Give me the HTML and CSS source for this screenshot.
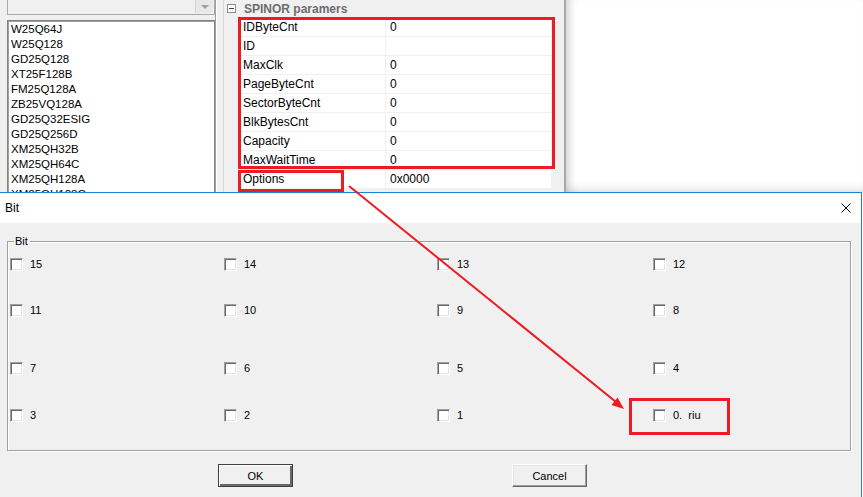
FILE: index.html
```html
<!DOCTYPE html>
<html lang="en">
<head>
    <meta charset="UTF-8">
    <meta name="viewport" content="width=device-width, initial-scale=1.0">
    <title>SPINOR Options - Bit</title>
    <link rel="stylesheet" href="styles.css">
</head>
<body>
    <div class="app">
        <div class="main">
            <div class="device-panel">
                <div class="combo"><span class="combo-btn"><span class="combo-arrow"></span></span></div>
                <ul class="device-list">
                    <li>W25Q64J</li>
                    <li>W25Q128</li>
                    <li>GD25Q128</li>
                    <li>XT25F128B</li>
                    <li>FM25Q128A</li>
                    <li>ZB25VQ128A</li>
                    <li>GD25Q32ESIG</li>
                    <li>GD25Q256D</li>
                    <li>XM25QH32B</li>
                    <li>XM25QH64C</li>
                    <li>XM25QH128A</li>
                    <li>XM25QH128C</li>
                </ul>
            </div>
            <div class="splitter"></div>
            <div class="prop-panel">
                <div class="prop-grid">
                    <div class="prop-cat"><span class="collapse-box"></span>SPINOR paramers</div>
                    <div class="prop-row"><span class="prop-name">IDByteCnt</span><span class="prop-value">0</span></div>
                    <div class="prop-row"><span class="prop-name">ID</span><span class="prop-value"></span></div>
                    <div class="prop-row"><span class="prop-name">MaxClk</span><span class="prop-value">0</span></div>
                    <div class="prop-row"><span class="prop-name">PageByteCnt</span><span class="prop-value">0</span></div>
                    <div class="prop-row"><span class="prop-name">SectorByteCnt</span><span class="prop-value">0</span></div>
                    <div class="prop-row"><span class="prop-name">BlkBytesCnt</span><span class="prop-value">0</span></div>
                    <div class="prop-row"><span class="prop-name">Capacity</span><span class="prop-value">0</span></div>
                    <div class="prop-row"><span class="prop-name">MaxWaitTime</span><span class="prop-value">0</span></div>
                    <div class="prop-row"><span class="prop-name">Options</span><span class="prop-value">0x0000</span></div>
                </div>
                <div class="prop-edge"></div>
            </div>
            <div class="desktop"></div>
        </div>

        <div class="dialog">
            <div class="title-bar">
                <span class="title">Bit</span>
                <svg class="close" width="10" height="10" viewBox="0 0 10 10">
                    <path d="M0.5 0.5 L9.5 9.5 M9.5 0.5 L0.5 9.5" stroke="#000" stroke-width="1" fill="none"/>
                </svg>
            </div>
            <div class="client">
                <div class="group">
                    <span class="group-label">Bit</span>
                    <div class="bits">
                        <label class="bit"><span class="check"></span>15</label>
                        <label class="bit"><span class="check"></span>14</label>
                        <label class="bit"><span class="check"></span>13</label>
                        <label class="bit"><span class="check"></span>12</label>
                        <label class="bit"><span class="check"></span>11</label>
                        <label class="bit"><span class="check"></span>10</label>
                        <label class="bit"><span class="check"></span>9</label>
                        <label class="bit"><span class="check"></span>8</label>
                        <label class="bit"><span class="check"></span>7</label>
                        <label class="bit"><span class="check"></span>6</label>
                        <label class="bit"><span class="check"></span>5</label>
                        <label class="bit"><span class="check"></span>4</label>
                        <label class="bit"><span class="check"></span>3</label>
                        <label class="bit"><span class="check"></span>2</label>
                        <label class="bit"><span class="check"></span>1</label>
                        <label class="bit"><span class="check"></span>0.&nbsp; riu</label>
                    </div>
                </div>
                <div class="buttons">
                    <button class="btn btn-default">OK</button>
                    <button class="btn">Cancel</button>
                </div>
            </div>
        </div>

        <div class="mark mark-params"></div>
        <div class="mark mark-options"></div>
        <div class="mark mark-bit0"></div>
        <svg class="arrow" width="863" height="497" viewBox="0 0 863 497">
            <line x1="349" y1="186" x2="616" y2="402" stroke="#ed1c24" stroke-width="2"/>
            <polygon points="624,409 611.5,405 617.5,397.5" fill="#ed1c24"/>
        </svg>
    </div>
</body>
</html>
```

FILE: styles.css
```css
body {
    margin: 0;
    padding: 0;
    background-color: #fff;
    font-family: 'Liberation Sans', Arial, sans-serif;
    color: #000;
}

.app {
    position: relative;
    width: 863px;
    height: 497px;
    overflow: hidden;
}

/* main window behind the dialog */

.main {
    display: flex;
    height: 192px;
    overflow: hidden;
    background: #f0f0f0;
}

.device-panel {
    width: 208px;
    padding-left: 7px;
}

.combo {
    position: relative;
    height: 14px;
    margin-top: -3px;
    margin-bottom: 5px;
    border: 1px solid #a9a9a9;
    background: #f0f0f0;
    box-sizing: border-box;
    height: 18px;
}

.combo-btn {
    position: absolute;
    right: 1px;
    top: 2px;
    width: 17px;
    height: 13px;
    background: #e8e8e8;
    border-left: 1px solid #d4d4d4;
    display: flex;
    align-items: center;
    justify-content: center;
}

.combo-arrow {
    width: 0;
    height: 0;
    border-left: 4px solid transparent;
    border-right: 4px solid transparent;
    border-top: 4px solid #a0a0a0;
    margin-top: 1px;
}

.device-list {
    list-style: none;
    margin: 0;
    padding: 0 0 0 2px;
    height: 200px;
    background: #fff;
    border: 1px solid #828282;
    box-shadow: inset 1px 1px 0 #a0a0a0;
    font-size: 11.5px;
    line-height: 15px;
    padding-top: 1px;
}

.device-list li {
    padding-left: 1px;
}

.splitter {
    width: 7px;
    border-left: 1px solid #a0a0a0;
    box-shadow: inset 1px 0 0 #fff;
}

.prop-panel {
    display: flex;
    width: 342px;
    border-left: 1px solid #d8d8d8;
}

.prop-grid {
    width: 329px;
    font-size: 12px;
}

.prop-cat {
    display: flex;
    align-items: center;
    height: 17px;
    border-bottom: 1px solid #f0f0f0;
    padding-left: 3px;
    font-weight: bold;
    color: #6d6d6d;
}

.collapse-box {
    position: relative;
    width: 7px;
    height: 7px;
    border: 1px solid #8c8c8c;
    background: #fff;
    margin-right: 8px;
    margin-top: -1px;
}

.collapse-box::after {
    content: "";
    position: absolute;
    left: 1px;
    top: 3px;
    width: 5px;
    height: 1px;
    background: #444;
}

.prop-row {
    display: flex;
    height: 18px;
    margin-left: 15px;
    border-bottom: 1px solid #f0f0f0;
    background: #fff;
    line-height: 18px;
}

.prop-name {
    width: 142px;
    padding-left: 4px;
    border-right: 1px solid #f0f0f0;
}

.prop-value {
    padding-left: 4px;
}

.prop-edge {
    width: 10px;
    margin-left: 3px;
    border-right: 2px solid #a8a8a8;
}

.desktop {
    flex: 1;
    background: #fff;
    box-shadow: inset 9px 0 8px -6px rgba(0, 0, 0, 0.18), inset 0 -9px 8px -6px rgba(0, 0, 0, 0.12);
}

/* Bit dialog */

.dialog {
    width: 861px;
    border-top: 1px solid #1883d7;
    border-right: 1px solid #1883d7;
    background: #f0f0f0;
    height: 305px;
}

.title-bar {
    display: flex;
    align-items: center;
    justify-content: space-between;
    height: 30px;
    background: #fff;
    padding: 0 10px 0 5px;
    font-size: 12px;
}

.close {
    display: block;
}

.client {
    padding: 18px 0 0 7px;
    font-size: 11px;
}

.group {
    position: relative;
    width: 842px;
    border: 1px solid #a0a0a0;
    box-shadow: inset 1px 1px 0 #fff, 1px 1px 0 #fff;
}

.group-label {
    position: absolute;
    left: 6px;
    top: -7px;
    padding: 0 2px 0 1px;
    background: #f0f0f0;
    line-height: 13px;
}

.bits {
    display: grid;
    grid-template-columns: 214px 213px 216px 1fr;
    grid-template-rows: 46px 58px 47px 13px;
    padding: 16px 0 28px 2px;
}

.bit {
    display: flex;
    align-items: center;
    height: 13px;
    line-height: 13px;
}

.check {
    width: 11px;
    height: 11px;
    margin-right: 7px;
    background: #fff;
    border: 1px solid;
    border-color: #a0a0a0 #fff #fff #a0a0a0;
    box-shadow: inset 1px 1px 0 #696969, inset -1px -1px 0 #e3e3e3;
}

.buttons {
    display: flex;
    gap: 219px;
    padding: 13px 0 0 211px;
}

.btn {
    width: 75px;
    height: 23px;
    padding: 0;
    font-family: 'Liberation Sans', Arial, sans-serif;
    font-size: 11px;
    color: #000;
    background: #f0f0f0;
    border: 1px solid;
    border-color: #fff #696969 #696969 #fff;
    box-shadow: inset -1px -1px 0 #a0a0a0, inset 1px 1px 0 #e3e3e3;
}

.btn-default {
    border: 1px solid #404040;
    box-shadow: inset 1px 1px 0 #fff, inset -2px -2px 0 #696969;
}

/* red annotations */

.mark {
    position: absolute;
    border: 3px solid #ed1c24;
    box-sizing: border-box;
}

.mark-params {
    left: 238px;
    top: 17px;
    width: 317px;
    height: 152px;
}

.mark-options {
    left: 238px;
    top: 170px;
    width: 106px;
    height: 22px;
}

.mark-bit0 {
    left: 629px;
    top: 398px;
    width: 101px;
    height: 37px;
}

.arrow {
    position: absolute;
    left: 0;
    top: 0;
    pointer-events: none;
}
```
